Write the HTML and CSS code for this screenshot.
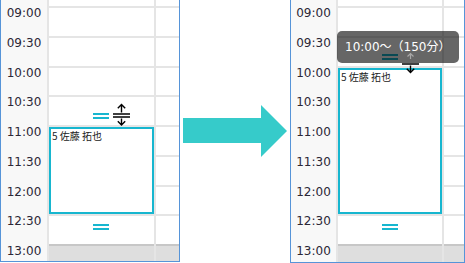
FILE: index.html
```html
<!DOCTYPE html>
<html lang="ja">
<head>
    <meta charset="UTF-8">
    <title>予定の長さを変更</title>
    <link rel="stylesheet" href="styles.css">
</head>
<body>
    <div class="demo">
        <!-- before -->
        <div class="cal cal-before">
            <div class="times">
                <div class="time">09:00</div>
                <div class="time">09:30</div>
                <div class="time">10:00</div>
                <div class="time">10:30</div>
                <div class="time">11:00</div>
                <div class="time">11:30</div>
                <div class="time">12:00</div>
                <div class="time">12:30</div>
                <div class="time">13:00</div>
            </div>
            <div class="day">
                <div class="slot"></div>
                <div class="slot"></div>
                <div class="slot"></div>
                <div class="slot"></div>
                <div class="slot"></div>
                <div class="slot"></div>
                <div class="slot"></div>
                <div class="slot"></div>
                <div class="slot off"></div>
                <div class="handle" style="top: 113px;"></div>
                <div class="event" style="top: 127px; height: 87px;">5 佐藤 拓也</div>
                <div class="handle" style="top: 224px;"></div>
                <svg class="cursor" style="left: 63px; top: 103px;" width="19" height="23" viewBox="0 0 19 23">
                    <path d="M9.5 1.5V9.5M5.8 5.2L9.5 1.5L13.2 5.2M1 11H18M1 14H18M9.5 15.5V22M5.8 18.3L9.5 22L13.2 18.3" fill="none" stroke="#000" stroke-width="1.4"/>
                </svg>
            </div>
            <div class="day day-rest">
                <div class="slot"></div>
                <div class="slot"></div>
                <div class="slot"></div>
                <div class="slot"></div>
                <div class="slot"></div>
                <div class="slot"></div>
                <div class="slot"></div>
                <div class="slot"></div>
                <div class="slot off"></div>
            </div>
        </div>

        <svg class="arrow" width="104" height="52" viewBox="0 0 104 52">
            <polygon points="0,13 78,13 78,0 104,26 78,52 78,38 0,38" fill="#36cbca"/>
        </svg>

        <!-- after -->
        <div class="cal cal-after">
            <div class="times">
                <div class="time">09:00</div>
                <div class="time">09:30</div>
                <div class="time">10:00</div>
                <div class="time">10:30</div>
                <div class="time">11:00</div>
                <div class="time">11:30</div>
                <div class="time">12:00</div>
                <div class="time">12:30</div>
                <div class="time">13:00</div>
            </div>
            <div class="day">
                <div class="slot"></div>
                <div class="slot"></div>
                <div class="slot"></div>
                <div class="slot"></div>
                <div class="slot"></div>
                <div class="slot"></div>
                <div class="slot"></div>
                <div class="slot"></div>
                <div class="slot off"></div>
                <div class="handle" style="top: 54px;"></div>
                <div class="event" style="top: 68px; height: 146px;">5 佐藤 拓也</div>
                <div class="handle" style="top: 224px;"></div>
            </div>
            <div class="day day-rest">
                <div class="slot"></div>
                <div class="slot"></div>
                <div class="slot"></div>
                <div class="slot"></div>
                <div class="slot"></div>
                <div class="slot"></div>
                <div class="slot"></div>
                <div class="slot"></div>
                <div class="slot off"></div>
            </div>
            <div class="tooltip">10:00～（150分）</div>
            <!-- cursor sits on top of the tooltip, upper half faded -->
            <svg class="cursor cursor-drag" width="19" height="23" viewBox="0 0 19 23">
                <path d="M9.5 2.5V8M6.5 5.5L9.5 2.5L12.5 5.5" fill="none" stroke="#a8a8a8" stroke-width="1.2"/>
                <path d="M1 13H18M9.5 14.5V21.5M5.8 17.8L9.5 21.5L13.2 17.8" fill="none" stroke="#000" stroke-width="1.4"/>
            </svg>
        </div>
    </div>
</body>
</html>
```

FILE: styles.css
```css
body {
    margin: 0;
    background: #fff;
    font-family: "DejaVu Sans", "Noto Sans CJK JP", sans-serif;
}
.demo {
    display: flex;
    align-items: flex-start;
}
.cal {
    position: relative;
    display: flex;
    box-sizing: border-box;
    height: 262px;
    border: 1px solid #5694d8;
    border-top: none;
}
.cal-before {
    width: 180px;
}
.cal-after {
    width: 175px;
    height: 263px;
}
.times {
    width: 46px;
    padding-top: 6px;
    background-color: #f8f8f8;
}
.cal-after .times {
    width: 45px;
}
.time {
    height: 29.75px;
    font-size: 12px;
    line-height: 14px;
    text-align: center;
    color: #2b2736;
}
.day {
    position: relative;
    display: flex;
    flex-direction: column;
    width: 105px;
    padding-top: 6px;
    border-left: 2px solid rgba(0, 0, 0, 0.1);
}
.cal-after .day {
    width: 104px;
}
.cal .day-rest {
    flex: 1;
    width: auto;
}
.slot {
    flex: none;
    height: 29.75px;
    box-sizing: border-box;
    border-top: 2px solid rgba(0, 0, 0, 0.1);
}
.slot.off {
    flex: 1;
    background-color: #dedede;
}
.event {
    position: absolute;
    left: 0;
    right: 0;
    box-sizing: border-box;
    border: 2px solid #17b6cf;
    background: #fff;
    padding: 0 1px;
    font-family: "Noto Sans CJK JP", sans-serif;
    font-size: 10px;
    line-height: 14px;
    color: #222;
}
.handle {
    position: absolute;
    left: 44px;
    width: 16px;
    height: 2px;
    border-top: 2px solid #17b6cf;
    border-bottom: 2px solid #17b6cf;
}
.cursor {
    position: absolute;
}
.cursor-drag {
    left: 110px;
    top: 51px;
}
.arrow {
    margin: 105px 3px 0 3px;
}
.tooltip {
    position: absolute;
    left: 46px;
    top: 31px;
    height: 32px;
    padding: 0 8px;
    border-radius: 5px;
    background-color: rgba(0, 0, 0, 0.6);
    color: #fff;
    font-size: 12px;
    line-height: 32px;
    white-space: nowrap;
}
```
